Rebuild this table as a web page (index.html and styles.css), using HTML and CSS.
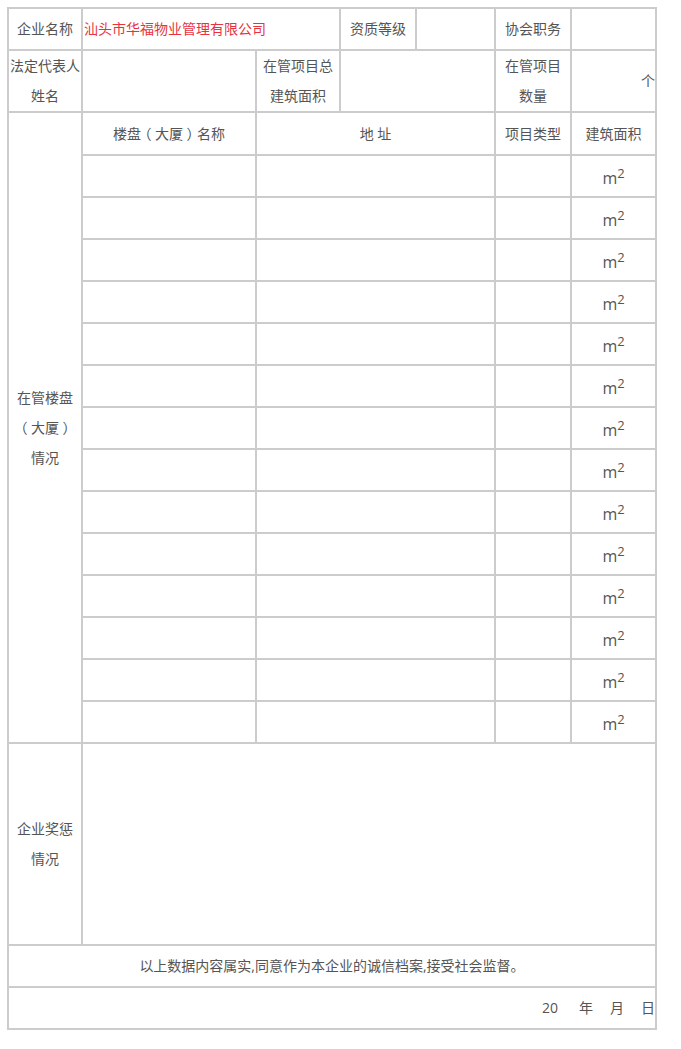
FILE: index.html
```html
<!DOCTYPE html>
<html lang="zh-CN">
<head>
<meta charset="utf-8">
<title>企业信用档案</title>
<link rel="stylesheet" href="styles.css">
</head>
<body>
<table class="form">
  <colgroup>
    <col class="c1"><col class="c2"><col class="c3"><col class="c4"><col class="c5"><col class="c6"><col class="c7">
  </colgroup>
  <tr class="h42">
    <td>企业名称</td>
    <td colspan="2" class="name">汕头市华福物业管理有限公司</td>
    <td>资质等级</td>
    <td></td>
    <td>协会职务</td>
    <td></td>
  </tr>
  <tr class="h61">
    <td>法定代表人<br>姓名</td>
    <td></td>
    <td>在管项目总<br>建筑面积</td>
    <td colspan="2"></td>
    <td>在管项目<br>数量</td>
    <td class="right">个</td>
  </tr>
  <tr class="h43">
    <td rowspan="15">在管楼盘<br><span class="pn">（</span>大厦<span class="pn">）</span><br>情况</td>
    <td>楼盘<span class="pn">（</span>大厦<span class="pn">）</span>名称</td>
    <td colspan="3">地 址</td>
    <td>项目类型</td>
    <td>建筑面积</td>
  </tr>
  <tr class="h42"><td></td><td colspan="3"></td><td></td><td class="unit">m<sup>2</sup></td></tr>
  <tr class="h42"><td></td><td colspan="3"></td><td></td><td class="unit">m<sup>2</sup></td></tr>
  <tr class="h42"><td></td><td colspan="3"></td><td></td><td class="unit">m<sup>2</sup></td></tr>
  <tr class="h42"><td></td><td colspan="3"></td><td></td><td class="unit">m<sup>2</sup></td></tr>
  <tr class="h42"><td></td><td colspan="3"></td><td></td><td class="unit">m<sup>2</sup></td></tr>
  <tr class="h42"><td></td><td colspan="3"></td><td></td><td class="unit">m<sup>2</sup></td></tr>
  <tr class="h42"><td></td><td colspan="3"></td><td></td><td class="unit">m<sup>2</sup></td></tr>
  <tr class="h42"><td></td><td colspan="3"></td><td></td><td class="unit">m<sup>2</sup></td></tr>
  <tr class="h42"><td></td><td colspan="3"></td><td></td><td class="unit">m<sup>2</sup></td></tr>
  <tr class="h42"><td></td><td colspan="3"></td><td></td><td class="unit">m<sup>2</sup></td></tr>
  <tr class="h42"><td></td><td colspan="3"></td><td></td><td class="unit">m<sup>2</sup></td></tr>
  <tr class="h42"><td></td><td colspan="3"></td><td></td><td class="unit">m<sup>2</sup></td></tr>
  <tr class="h42"><td></td><td colspan="3"></td><td></td><td class="unit">m<sup>2</sup></td></tr>
  <tr class="h42"><td></td><td colspan="3"></td><td></td><td class="unit">m<sup>2</sup></td></tr>
  <tr class="h202">
    <td>企业奖惩<br>情况</td>
    <td colspan="6"></td>
  </tr>
  <tr class="h42">
    <td colspan="7">以上数据内容属实,同意作为本企业的诚信档案,接受社会监督。</td>
  </tr>
  <tr class="h42">
    <td colspan="7" class="right date"><span>20</span><span class="d1">年</span><span class="d2">月</span><span class="d2">日</span></td>
  </tr>
</table>
</body>
</html>
```

FILE: styles.css
```css
html, body {
  margin: 0;
  background: #fff;
}
body {
  padding: 7px;
  font-family: "Open Sans", "Noto Sans CJK SC", sans-serif;
  font-size: 14px;
  color: #555;
}
.form {
  border-collapse: separate;
  border-spacing: 0;
  table-layout: fixed;
  width: 650px;
  border-top: 2px solid #ccc;
  border-left: 2px solid #ccc;
}
.c1 { width: 74px; }
.c2 { width: 174px; }
.c3 { width: 84px; }
.c4 { width: 76px; }
.c5 { width: 79px; }
.c6 { width: 76px; }
.c7 { width: 85px; }
.form td {
  border-right: 2px solid #ccc;
  border-bottom: 2px solid #ccc;
  padding: 0;
  text-align: center;
  vertical-align: middle;
  line-height: 30px;
  white-space: nowrap;
  overflow: hidden;
}
.h42 { height: 42px; }
.h43 { height: 43px; }
.h61 { height: 61px; }
.h202 { height: 202px; }
.form td.name {
  text-align: left;
  color: #e8333f;
  padding-left: 1px;
}
.form td.right {
  text-align: right;
}
.pn {
  font-feature-settings: "halt";
  text-spacing-trim: space-all;
  margin: 0 3.5px;
}
.form td.unit {
  font-size: 16px;
  padding-top: 3px;
}
.unit sup {
  font-size: 13px;
  line-height: 0;
  vertical-align: 6px;
}
.date .d1 { margin-left: 21px; }
.date .d2 { margin-left: 17px; }
```
